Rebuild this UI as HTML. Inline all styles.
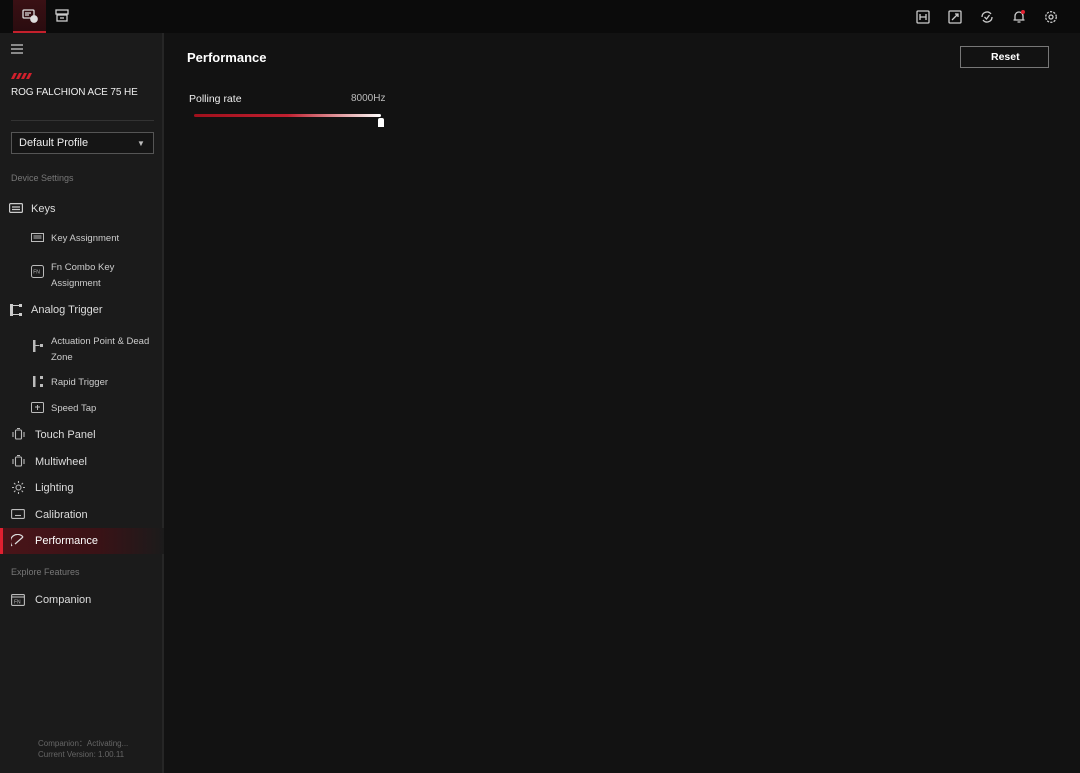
<!DOCTYPE html>
<html><head><style>
*{margin:0;padding:0;box-sizing:border-box}
body{width:1080px;height:773px;background:#121212;font-family:"Liberation Sans",sans-serif;color:#ddd;position:relative;overflow:hidden}
.top{position:absolute;left:0;top:0;width:1080px;height:33px;background:#0b0b0b}
.tab1{position:absolute;left:13px;top:0;width:33px;height:33px;background:linear-gradient(#3a1014,#2a0c0f);border-bottom:2px solid #c4202c}
.side{position:absolute;left:0;top:33px;width:164px;height:740px;background:#1b1b1b;border-right:2px solid #262626}
.t{position:absolute;white-space:nowrap}
.ic{position:absolute}
</style></head><body>
<div class="top"></div>
<div class="tab1"></div>
<svg class="ic" style="left:22px;top:9px" width="16" height="14" viewBox="0 0 16 14" fill="none" stroke="#ddd" stroke-width="1.3"><rect x="1" y="1" width="11" height="8" rx="1"/><circle cx="12" cy="10" r="3.2" fill="#ddd"/><path d="M3 4h6M3 6h4"/></svg>
<svg class="ic" style="left:55px;top:9px" width="14" height="14" viewBox="0 0 14 14" fill="none" stroke="#ccc" stroke-width="1.3"><rect x="1" y="1" width="12" height="4"/><rect x="2" y="6" width="10" height="6"/><path d="M5 9h4"/></svg>
<svg class="ic" style="left:916px;top:10px" width="14" height="14" viewBox="0 0 14 14" fill="none" stroke="#ccc" stroke-width="1.3"><rect x="1" y="1" width="12" height="12" rx="1"/><path d="M4 4v6M10 4v6M4 7h6"/></svg>
<svg class="ic" style="left:948px;top:10px" width="14" height="14" viewBox="0 0 14 14" fill="none" stroke="#ccc" stroke-width="1.3"><rect x="1" y="1" width="12" height="12" rx="1"/><path d="M4 10l6-6M7 4h3v3"/></svg>
<svg class="ic" style="left:980px;top:10px" width="14" height="14" viewBox="0 0 14 14" fill="none" stroke="#ccc" stroke-width="1.3"><path d="M2 7a5 5 0 0 1 9-3M12 7a5 5 0 0 1-9 3"/><path d="M4.5 7l2 2 3-4"/></svg>
<svg class="ic" style="left:1012px;top:9px" width="14" height="15" viewBox="0 0 14 15" fill="none" stroke="#ccc" stroke-width="1.3"><path d="M3 11V7a4 4 0 0 1 8 0v4M1.5 11h11M5.5 13h3"/><circle cx="11" cy="3" r="2" fill="#e02030" stroke="none"/></svg>
<svg class="ic" style="left:1044px;top:10px" width="14" height="14" viewBox="0 0 14 14" fill="none" stroke="#ccc" stroke-width="1.3"><circle cx="7" cy="7" r="2"/><circle cx="7" cy="7" r="5.3" stroke-dasharray="2.2 1.2"/></svg>

<div class="side"></div>
<svg class="ic" style="left:11px;top:44px" width="12" height="10" stroke="#ccc" stroke-width="1.2"><path d="M0 1h12M0 5h12M0 9h12"/></svg>
<svg class="ic" style="left:11px;top:73px" width="21" height="6"><path d="M0 6l3-6h3l-3 6zM5 6l3-6h3l-3 6zM10 6l3-6h3l-3 6zM15 6l3-6h3l-3 6z" fill="#d0202c"/></svg>
<div class="t" style="left:11px;top:87px;font-size:10px;letter-spacing:-0.1px;color:#eee">ROG FALCHION ACE 75 HE</div>
<div style="position:absolute;left:11px;top:120px;width:143px;height:1px;background:#333"></div>
<div style="position:absolute;left:11px;top:132px;width:143px;height:22px;border:1px solid #555;background:#151515"></div>
<div class="t" style="left:19px;top:137px;font-size:11px;color:#eee">Default Profile</div>
<div class="t" style="left:137px;top:139px;font-size:8px;color:#bbb">▼</div>
<div class="t" style="left:11px;top:173px;font-size:9px;color:#777">Device Settings</div>

<div class="t" style="left:31px;top:203px;font-size:11px;color:#ddd">Keys</div>
<div class="t" style="left:51px;top:233px;font-size:9.5px;color:#ccc">Key Assignment</div>
<div class="t" style="left:51px;top:260px;font-size:9.5px;color:#ccc;line-height:16px">Fn Combo Key<br>Assignment</div>
<div class="t" style="left:31px;top:304px;font-size:11px;color:#ddd">Analog Trigger</div>
<div class="t" style="left:51px;top:334px;font-size:9.5px;color:#ccc;line-height:16px">Actuation Point &amp; Dead<br>Zone</div>
<div class="t" style="left:51px;top:377px;font-size:9.5px;color:#ccc">Rapid Trigger</div>
<div class="t" style="left:51px;top:403px;font-size:9.5px;color:#ccc">Speed Tap</div>
<div class="t" style="left:35px;top:429px;font-size:11px;color:#ddd">Touch Panel</div>
<div class="t" style="left:35px;top:456px;font-size:11px;color:#ddd">Multiwheel</div>
<div class="t" style="left:35px;top:482px;font-size:11px;color:#ddd">Lighting</div>
<div class="t" style="left:35px;top:509px;font-size:11px;color:#ddd">Calibration</div>
<div style="position:absolute;left:0;top:528px;width:164px;height:26px;background:linear-gradient(90deg,#4a1419,#3a1216 60%,#1b1b1b)"></div>
<div style="position:absolute;left:0;top:528px;width:3px;height:26px;background:#e02030"></div>
<div class="t" style="left:35px;top:535px;font-size:11px;color:#fff">Performance</div>
<div class="t" style="left:11px;top:567px;font-size:9px;color:#777">Explore Features</div>
<div class="t" style="left:35px;top:594px;font-size:11px;color:#ddd">Companion</div>
<div class="t" style="left:38px;top:738px;font-size:8px;color:#666;line-height:11px">Companion：Activating...<br>Current Version: 1.00.11</div>

<svg class="ic" style="left:9px;top:203px" width="14" height="10" fill="none" stroke="#ccc" stroke-width="1.2"><rect x="0.6" y="0.6" width="12.8" height="8.8" rx="1"/><path d="M3 4h8M3 6.5h8"/></svg>
<svg class="ic" style="left:31px;top:233px" width="13" height="9" fill="none" stroke="#bbb" stroke-width="1"><rect x="0.5" y="0.5" width="12" height="8"/><path d="M2.5 3h8M2.5 5h8"/></svg>
<svg class="ic" style="left:31px;top:265px" width="13" height="13" fill="none" stroke="#bbb" stroke-width="1"><rect x="0.5" y="0.5" width="12" height="12" rx="2"/><text x="2.2" y="8.5" font-size="5" fill="#bbb" stroke="none">FN</text></svg>
<svg class="ic" style="left:10px;top:304px" width="12" height="12" fill="#ccc"><rect x="0" y="0" width="3" height="12"/><rect x="9" y="0" width="3" height="3"/><rect x="9" y="9" width="3" height="3"/><rect x="3" y="1" width="6" height="1"/><rect x="3" y="10" width="6" height="1"/></svg>
<svg class="ic" style="left:33px;top:340px" width="10" height="12" fill="#bbb"><rect x="0" y="0" width="2.5" height="12"/><rect x="2.5" y="5" width="4" height="1"/><rect x="7" y="4" width="3" height="3"/></svg>
<svg class="ic" style="left:33px;top:376px" width="10" height="11" fill="#bbb"><rect x="0" y="0" width="2.5" height="11"/><rect x="7" y="0" width="3" height="3"/><rect x="7" y="8" width="3" height="3"/></svg>
<svg class="ic" style="left:31px;top:402px" width="13" height="11" fill="none" stroke="#bbb" stroke-width="1"><rect x="0.5" y="0.5" width="12" height="10" rx="1"/><path d="M4 5h5M6.5 3v5"/></svg>
<svg class="ic" style="left:12px;top:428px" width="13" height="13" fill="none" stroke="#bbb" stroke-width="1.1"><rect x="3.5" y="2" width="6" height="9" rx="1"/><path d="M1 4v5M12 4v5M5 0.5h3"/></svg>
<svg class="ic" style="left:12px;top:455px" width="13" height="13" fill="none" stroke="#bbb" stroke-width="1.1"><rect x="3.5" y="2" width="6" height="9" rx="1"/><path d="M1 4v5M12 4v5M5 0.5h3"/></svg>
<svg class="ic" style="left:12px;top:481px" width="13" height="13" fill="none" stroke="#bbb" stroke-width="1.1"><circle cx="6.5" cy="6.5" r="2.5"/><path d="M6.5 0v2M6.5 11v2M0 6.5h2M11 6.5h2M2 2l1.4 1.4M9.6 9.6L11 11M2 11l1.4-1.4M9.6 3.4L11 2"/></svg>
<svg class="ic" style="left:11px;top:509px" width="14" height="10" fill="none" stroke="#bbb" stroke-width="1.1"><rect x="0.6" y="0.6" width="12.8" height="8.8" rx="1"/><path d="M4 6.5h6"/></svg>
<svg class="ic" style="left:11px;top:534px" width="14" height="13" fill="none" stroke="#ddd" stroke-width="1.2"><path d="M1 12A6 6 0 0 1 12 3M4 10l8-7"/></svg>
<svg class="ic" style="left:11px;top:594px" width="14" height="12" fill="none" stroke="#bbb" stroke-width="1.1"><rect x="0.6" y="0.6" width="12.8" height="10.8" rx="1"/><path d="M0.6 3h12.8"/><text x="3" y="9.5" font-size="5" fill="#bbb" stroke="none">FN</text></svg>

<div class="t" style="left:187px;top:50px;font-size:13px;font-weight:bold;color:#fff">Performance</div>
<div style="position:absolute;left:960px;top:46px;width:89px;height:22px;border:1px solid #777;background:#121212"></div>
<div class="t" style="left:991px;top:51px;font-size:10.5px;font-weight:bold;color:#fff">Reset</div>
<div class="t" style="left:189px;top:93px;font-size:10.5px;color:#eee">Polling rate</div>
<div class="t" style="left:351px;top:93px;font-size:10px;color:#bbb">8000Hz</div>
<div style="position:absolute;left:194px;top:114px;width:187px;height:3px;border-radius:2px;background:linear-gradient(90deg,#a0101c,#c02030 50%,#f0d0d0 90%,#fff)"></div>
<div style="position:absolute;left:378px;top:118px;width:6px;height:9px;background:#fff;border-radius:2px 2px 0 0"></div>
</body></html>
